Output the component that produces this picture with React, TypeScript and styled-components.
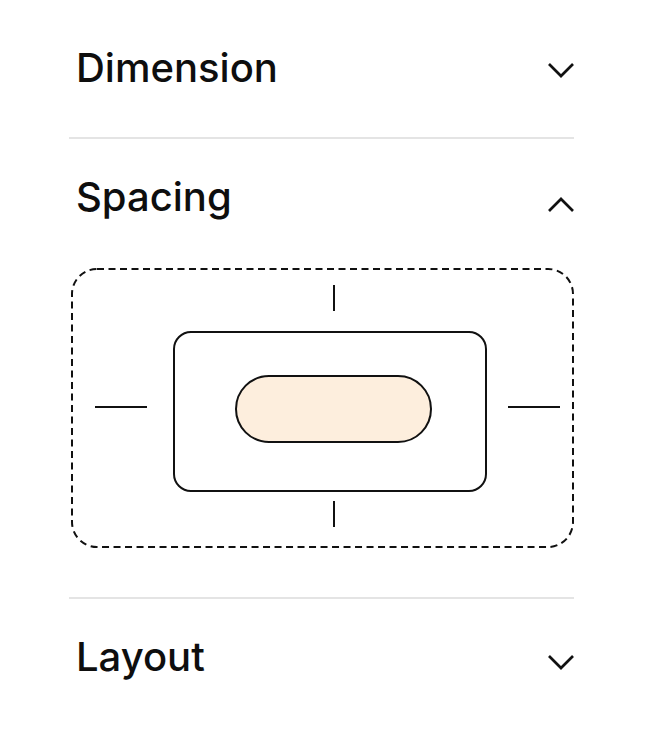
import React from "react";
import styled, { createGlobalStyle } from "styled-components";

const GlobalStyle = createGlobalStyle`
  html, body {
    margin: 0;
    padding: 0;
    background: #ffffff;
  }
  body {
    font-family: Inter, "Noto Sans", "Liberation Sans", sans-serif;
    color: #111111;
  }
`;

// dashed frame of the spacing diagram, longer dashes than css "dashed" gives
const frameSvg = encodeURIComponent(
  `<svg xmlns="http://www.w3.org/2000/svg" width="503" height="280" viewBox="0 0 503 280"><rect x="1" y="1" width="501" height="278" rx="25" ry="25" fill="none" stroke="#111" stroke-width="2" stroke-dasharray="7 4.5"/></svg>`
);

const Panel = styled.div`
  width: 646px;
  height: 740px;
  box-sizing: border-box;
  padding: 0 71px 0 70px;
  overflow: hidden;
`;

const Section = styled.section<{ $top: number; $bottom: number }>`
  padding-top: ${(p) => p.$top}px;
  padding-bottom: ${(p) => p.$bottom}px;
`;

const Header = styled.div`
  height: 60px;
  display: flex;
  align-items: center;
  justify-content: space-between;
  padding-left: 6px;
`;

const Title = styled.h2`
  margin: 0;
  font-size: 40px;
  line-height: 1;
  font-weight: 500;
  color: #0e0e0e;
`;

const ChevronWrap = styled.span<{ $dy: number }>`
  display: flex;
  width: 28px;
  height: 16px;
  transform: translateY(${(p) => p.$dy}px);
`;

const Divider = styled.hr`
  margin: 0 1px 0 -1px;
  border: none;
  height: 2px;
  background: #e4e4e4;
`;

const Chevron: React.FC<{ up?: boolean; dy: number }> = ({ up, dy }) => (
  <ChevronWrap $dy={dy}>
    <svg width="28" height="16" viewBox="0 0 28 16" fill="none">
      <polyline
        points={up ? "2,14 14,2 26,14" : "2,2 14,14 26,2"}
        stroke="#111"
        strokeWidth="2.7"
        strokeLinejoin="miter"
      />
    </svg>
  </ChevronWrap>
);

const SpacingBox = styled.div`
  margin: 41px 1px 0 1px;
  width: 503px;
  height: 280px;
  box-sizing: border-box;
  background: url("data:image/svg+xml,${frameSvg}") no-repeat 0 0;
  padding: 17px 0 0 24px;
  display: grid;
  grid-template-columns: 52px 314px 52px;
  grid-template-rows: 46px 161px 35px;
  column-gap: 23px;
  grid-template-areas:
    ". top ."
    "left box right"
    ". bottom .";
`;

const VTick = styled.div<{ $area: string; $end?: boolean }>`
  grid-area: ${(p) => p.$area};
  justify-self: center;
  align-self: ${(p) => (p.$end ? "end" : "start")};
  width: 2px;
  height: 26px;
  margin-left: 14px;
  background: #111;
`;

const HTick = styled.div<{ $area: string; $shift: number }>`
  grid-area: ${(p) => p.$area};
  align-self: center;
  width: 52px;
  height: 2px;
  margin-left: ${(p) => p.$shift}px;
  margin-bottom: 9px;
  background: #111;
`;

const MarginBox = styled.div`
  grid-area: box;
  height: 161px;
  box-sizing: border-box;
  border: 2px solid #111;
  border-radius: 18px;
  display: flex;
  align-items: center;
  justify-content: center;
  margin-left: 3px;
  margin-right: -3px;
`;

const ContentPill = styled.div`
  width: 197px;
  height: 68px;
  box-sizing: border-box;
  border: 2px solid #111;
  border-radius: 34px;
  background: #fdeedd;
  margin-left: 6px;
  margin-bottom: 5px;
`;

export default function App() {
  return (
    <>
      <GlobalStyle />
      <Panel>
        <Section $top={38} $bottom={39}>
          <Header>
            <Title>Dimension</Title>
            <Chevron dy={2} />
          </Header>
        </Section>
        <Divider />
        <Section $top={28} $bottom={49}>
          <Header>
            <Title>Spacing</Title>
            <Chevron up dy={8} />
          </Header>
          <SpacingBox>
            <VTick $area="top" />
            <HTick $area="left" $shift={0} />
            <MarginBox>
              <ContentPill />
            </MarginBox>
            <HTick $area="right" $shift={1} />
            <VTick $area="bottom" $end />
          </SpacingBox>
        </Section>
        <Divider />
        <Section $top={28} $bottom={0}>
          <Header>
            <Title>Layout</Title>
            <Chevron dy={5} />
          </Header>
        </Section>
      </Panel>
    </>
  );
}
